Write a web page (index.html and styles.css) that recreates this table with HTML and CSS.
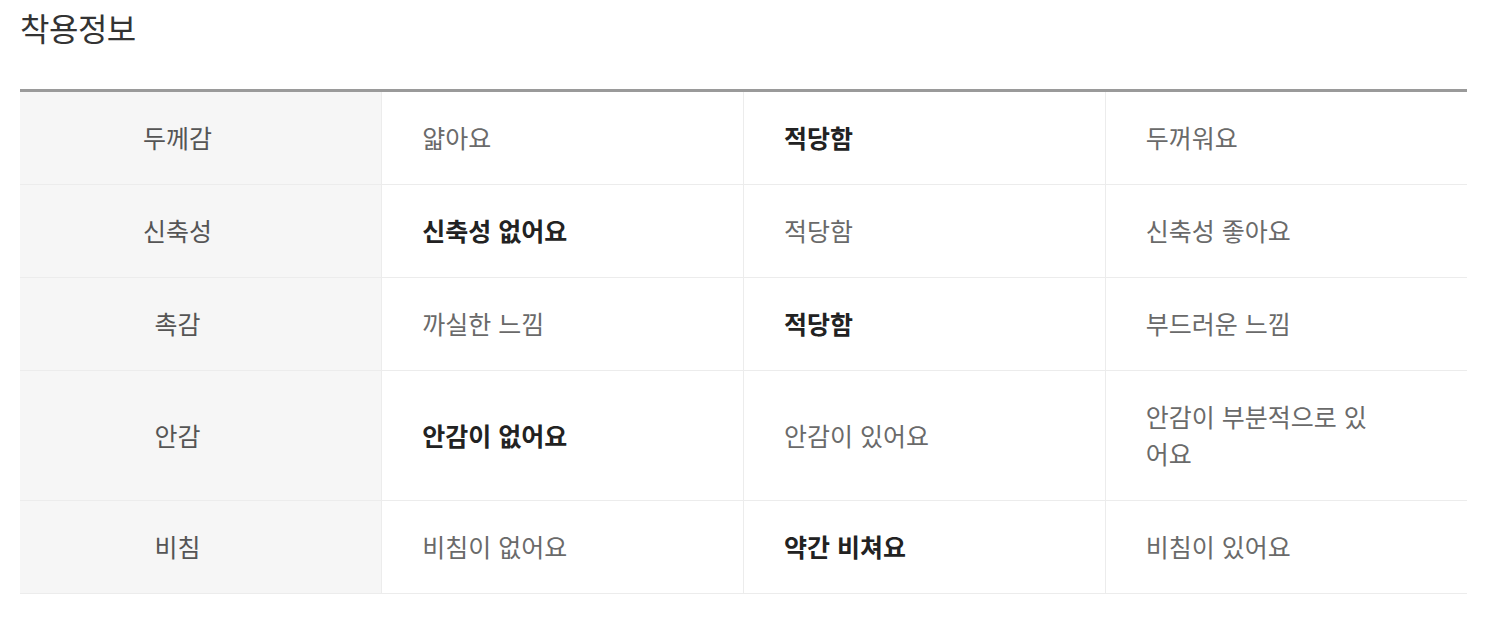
FILE: index.html
```html
<!DOCTYPE html>
<html lang="ko">
<head>
<meta charset="utf-8">
<title>착용정보</title>
<link rel="stylesheet" href="styles.css">
</head>
<body>
<section class="wear-info">
  <h2 class="wear-title">착용정보</h2>
  <table class="wear-table">
    <colgroup>
      <col class="c"><col class="c"><col class="c"><col class="c">
    </colgroup>
    <tbody>
      <tr>
        <th>두께감</th>
        <td>얇아요</td>
        <td class="on">적당함</td>
        <td>두꺼워요</td>
      </tr>
      <tr>
        <th>신축성</th>
        <td class="on">신축성 없어요</td>
        <td>적당함</td>
        <td>신축성 좋아요</td>
      </tr>
      <tr>
        <th>촉감</th>
        <td>까실한 느낌</td>
        <td class="on">적당함</td>
        <td>부드러운 느낌</td>
      </tr>
      <tr>
        <th>안감</th>
        <td class="on">안감이 없어요</td>
        <td>안감이 있어요</td>
        <td>안감이 부분적으로 있어요</td>
      </tr>
      <tr>
        <th>비침</th>
        <td>비침이 없어요</td>
        <td class="on">약간 비쳐요</td>
        <td>비침이 있어요</td>
      </tr>
    </tbody>
  </table>
</section>
</body>
</html>
```

FILE: styles.css
```css
html, body {
  margin: 0;
  padding: 0;
  background: #fff;
}

body {
  font-family: "Noto Sans CJK KR", "Noto Sans", sans-serif;
  color: #333;
}

.wear-info {
  padding: 5px 33px 0 20px;
}

.wear-title {
  margin: 0 0 40px;
  font-size: 32px;
  font-weight: 400;
  line-height: 44px;
  color: #333;
  letter-spacing: -0.5px;
}

.wear-table {
  width: 1447px;
  table-layout: fixed;
  border-collapse: collapse;
  border-top: 3px solid #9a9a9a;
}

.wear-table th,
.wear-table td {
  padding: 27px 92px 28px 40px;
  font-size: 25px;
  line-height: 37px;
  border-bottom: 1px solid #ececec;
  vertical-align: middle;
  text-align: left;
}

.wear-table th {
  font-weight: 400;
  color: #555;
  background: #f6f6f6;
  text-align: center;
  padding-right: 86px;
}

.wear-table td {
  color: #6a6a6a;
  border-left: 1px solid #ececec;
}

.wear-table td.on {
  color: #222;
  font-weight: 700;
}
```
